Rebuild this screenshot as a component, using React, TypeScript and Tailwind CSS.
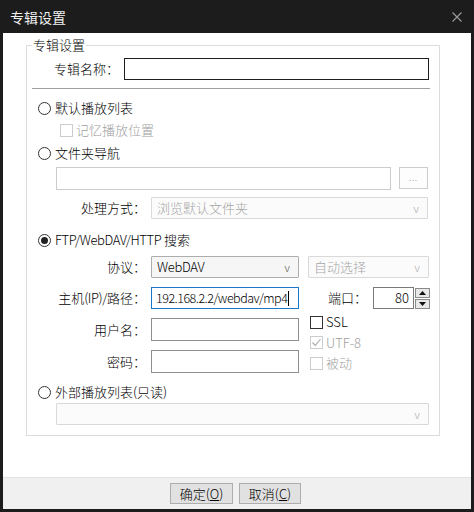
import React from 'react';

const Radio = ({ checked = false, label }: { checked?: boolean; label: React.ReactNode }) => (
  <div className="flex items-center h-[18px] ml-[11px]">
    <span className="w-[13px] h-[13px] rounded-full border border-[#333] bg-white flex items-center justify-center">
      {checked && <span className="w-[7px] h-[7px] rounded-full bg-[#222]" />}
    </span>
    <span className="ml-[4px] text-black">{label}</span>
  </div>
);

const Check = ({ label, checked = false, disabled = false, h = 'h-[20px]' }: { label: string; checked?: boolean; disabled?: boolean; h?: string }) => (
  <div className={`flex items-center ${h}`}>
    <span
      className={`w-[13px] h-[13px] border flex items-center justify-center ${
        disabled ? 'border-[#cccccc]' : 'border-[#333]'
      }`}
    >
      {checked && (
        <svg width="11" height="11" viewBox="0 0 11 11" fill="none" stroke="#b0b0b0" strokeWidth="1.2">
          <path d="M1.5 5.5l2.8 3L9.5 2" />
        </svg>
      )}
    </span>
    <span className={`ml-[3px] ${disabled ? 'text-[#a0a0a0]' : 'text-black'}`}>{label}</span>
  </div>
);

const Select = ({ text, w, disabled = false }: { text: string; w: string; disabled?: boolean }) => (
  <div
    className={`${w} h-[22px] border rounded-[1px] flex items-center justify-between pl-[5px] pr-[8px] ${
      disabled ? 'border-[#d9d9d9] bg-[#fbfbfb]' : 'border-[#adadad] bg-[#f6f6f6]'
    }`}
  >
    <span className={disabled ? 'text-[#a6a6a6]' : 'text-black tracking-[-0.3px]'}>{text}</span>
    <span className={`text-[11px] ${disabled ? 'text-[#a6a6a6]' : 'text-[#555]'}`}>v</span>
  </div>
);

const Label = ({ text }: { text: React.ReactNode }) => <div className="w-[119px] text-right text-black">{text}</div>;

export default function App() {
  return (
    <div className="w-[474px] h-[512px] bg-[#1c1c1c] flex flex-col font-['Noto_Sans_CJK_SC',sans-serif] font-light text-[13px] leading-[18px]">
      <div className="h-[33px] flex items-center justify-between pl-[10px] pr-[12px]">
        <span className="text-[14px] font-normal text-[#f0f0f0]">专辑设置</span>
        <svg width="10" height="10" viewBox="0 0 10 10" stroke="#9c9c9c" strokeWidth="1.1">
          <path d="M0.5 0.5l9 9M9.5 0.5l-9 9" />
        </svg>
      </div>

      <div className="mx-[3px] mb-[3px] flex-1 bg-white flex flex-col">
        <div className="flex-1 pt-[12px] pl-[23px]">
          <div className="relative w-[414px] h-[391px] border border-[#dcdcdc]">
            <div className="absolute -top-[10px] left-[5px] bg-white px-[1px] text-black">专辑设置</div>

            <div className="flex items-center mt-[12px]">
              <div className="w-[92px] text-right text-black">专辑名称：</div>
              <div className="ml-[5px] w-[305px] h-[22px] border border-[#1e1e1e]" />
            </div>

            <div className="ml-[5px] mt-[8px] w-[398px] h-px bg-[#a0a0a0]" />

            <div className="mt-[10px]">
              <Radio label="默认播放列表" />
            </div>
            <div className="mt-[4px] ml-[33px]">
              <Check label="记忆播放位置" disabled h="h-[18px]" />
            </div>
            <div className="mt-[5px]">
              <Radio label="文件夹导航" />
            </div>

            <div className="flex mt-[5px] ml-[29px]">
              <div className="w-[335px] h-[23px] border border-[#cccccc]" />
              <div className="ml-[8px] w-[29px] h-[22px] border border-[#cccccc] bg-[#fdfdfd] flex items-center justify-center text-[9px] text-[#888] tracking-[0.5px]">
                ...
              </div>
            </div>

            <div className="flex items-center mt-[7px]">
              <Label text="处理方式：" />
              <div className="ml-[5px]">
                <Select text="浏览默认文件夹" w="w-[277px]" disabled />
              </div>
            </div>

            <div className="mt-[12px]">
              <Radio checked label={<><span className="tracking-[-0.4px]">FTP/WebDAV/HTTP</span> 搜索</>} />
            </div>

            <div className="flex items-center mt-[7px]">
              <Label text="协议：" />
              <div className="ml-[5px]">
                <Select text="WebDAV" w="w-[148px]" />
              </div>
              <div className="ml-[9px]">
                <Select text="自动选择" w="w-[121px]" disabled />
              </div>
            </div>

            <div className="flex items-center mt-[9px]">
              <Label text={<>主机<span className="tracking-[-0.4px]">(IP)/</span>路径：</>} />
              <div className="ml-[5px] w-[148px] h-[22px] border border-[#1a78c8] flex items-center pl-[4px] text-black text-[12.5px] tracking-[-0.5px] whitespace-nowrap overflow-hidden">
                192.168.2.2/webdav/mp4<span className="w-px h-[15px] bg-black ml-[1px]" />
              </div>
              <div className="ml-[29px] w-[39px] text-black">端口：</div>
              <div className="ml-[6px] flex items-center">
                <div className="w-[41px] h-[22px] border border-[#7a7a7a] flex items-center justify-end pr-[4px] text-black">80</div>
                <div className="ml-[1px] flex flex-col gap-[1px]">
                  <div className="w-[15px] h-[10px] border border-[#8a8a8a] bg-[#e8e8e8] flex items-center justify-center">
                    <svg width="7" height="4" viewBox="0 0 7 4"><path d="M0 4h7L3.5 0z" fill="#111" /></svg>
                  </div>
                  <div className="w-[15px] h-[10px] border border-[#8a8a8a] bg-[#e8e8e8] flex items-center justify-center">
                    <svg width="7" height="4" viewBox="0 0 7 4"><path d="M0 0h7L3.5 4z" fill="#111" /></svg>
                  </div>
                </div>
              </div>
            </div>

            <div className="flex">
              <div className="flex flex-col">
                <div className="flex items-center mt-[9px]">
                  <Label text="用户名：" />
                  <div className="ml-[5px] w-[148px] h-[23px] border border-[#8f8f8f]" />
                </div>
                <div className="flex items-center mt-[9px]">
                  <Label text="密码：" />
                  <div className="ml-[5px] w-[148px] h-[23px] border border-[#8f8f8f]" />
                </div>
              </div>
              <div className="ml-[11px] pt-[3px] flex flex-col">
                <Check label="SSL" />
                <Check label="UTF-8" checked disabled h="h-[21px]" />
                <Check label="被动" disabled />
              </div>
            </div>

            <div className="mt-[10px]">
              <Radio label="外部播放列表(只读)" />
            </div>
            <div className="mt-[2px] ml-[29px]">
              <Select text="" w="w-[373px]" disabled />
            </div>
          </div>
        </div>

        <div className="h-[32px] border-t border-[#e3e3e3] bg-[#f0f0f0] flex justify-center gap-[6px] pt-[5px] pr-[3px]">
          <button className="w-[63px] h-[21px] border border-[#adadad] bg-[#e1e1e1] text-black leading-[19px]">
            确定(<span className="underline">O</span>)
          </button>
          <button className="w-[62px] h-[21px] border border-[#adadad] bg-[#e1e1e1] text-black leading-[19px]">
            取消(<span className="underline">C</span>)
          </button>
        </div>
      </div>
    </div>
  );
}
